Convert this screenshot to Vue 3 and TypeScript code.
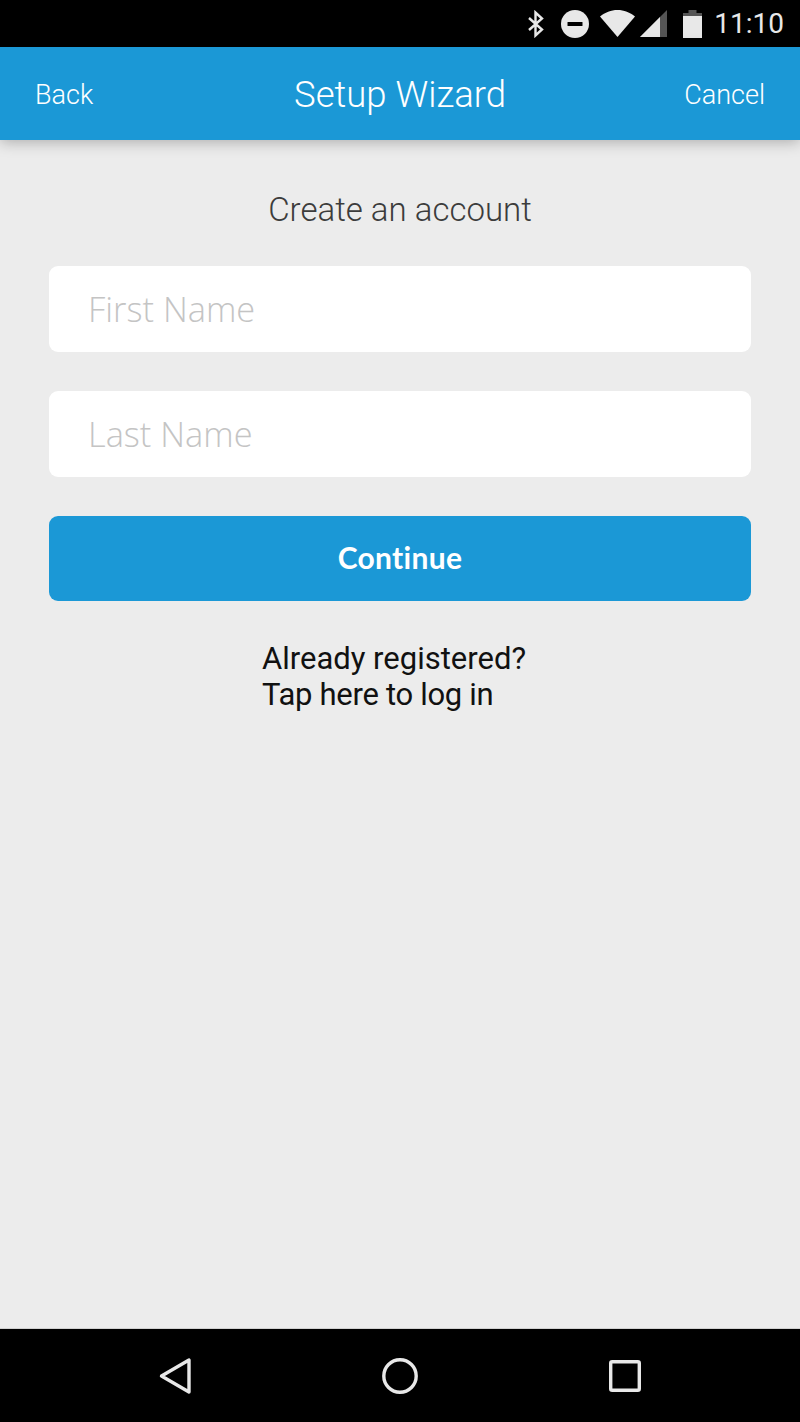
<script setup lang="ts">
const fields: string[] = ["First Name", "Last Name"];
</script>

<template>
  <div class="screen">
    <div class="status-bar">
      <svg class="ic-bt" width="20" height="28" viewBox="0 0 20 28">
        <path d="M3 8 L16 19.5 L9.5 25.5 V2.5 L16 8.5 L3 20" fill="none" stroke="#e8e8e8" stroke-width="2.4" />
      </svg>
      <svg class="ic-dnd" width="28" height="28" viewBox="0 0 28 28">
        <circle cx="14" cy="14" r="14" fill="#e8e8e8" />
        <rect x="6.5" y="12" width="15" height="4" rx="0.5" fill="#000" />
      </svg>
      <svg class="ic-wifi" width="35" height="27" viewBox="0 0 35 27">
        <path d="M0 6.5 C5 2.5 11 0 17.5 0 C24 0 30 2.5 35 6.5 L17.5 27 Z" fill="#e8e8e8" />
      </svg>
      <svg class="ic-signal" width="27" height="27" viewBox="0 0 27 27">
        <path d="M0 27 L27 0 V27 Z" fill="#555" />
        <path d="M0 27 L20 7 V27 Z" fill="#e8e8e8" />
      </svg>
      <svg class="ic-battery" width="19" height="28" viewBox="0 0 19 28">
        <path d="M5.5 0 H13.5 V3 H5.5 Z" fill="#555" />
        <path d="M0 3 H19 V7 H0 Z" fill="#555" />
        <path d="M0 6 H19 V28 H0 Z" fill="#e8e8e8" />
      </svg>
      <span class="clock">11:10</span>
    </div>

    <header class="app-bar">
      <span class="nav-link">Back</span>
      <span class="title">Setup Wizard</span>
      <span class="nav-link cancel">Cancel</span>
    </header>

    <main class="content">
      <h1 class="heading">Create an account</h1>
      <div v-for="f in fields" :key="f" class="field">{{ f }}</div>
      <button class="continue">Continue</button>
      <p class="login">
        <span>Already registered?</span>
        <span class="tap">Tap here to log in</span>
      </p>
    </main>

    <nav class="nav-bar">
      <svg width="34" height="38" viewBox="0 0 34 38">
        <path d="M2.5 19 L30 3 V35 Z" fill="none" stroke="#e8e8e8" stroke-width="3.4" stroke-linejoin="round" />
      </svg>
      <svg class="ic-home" width="36" height="36" viewBox="0 0 36 36">
        <circle cx="18" cy="18" r="16.2" fill="none" stroke="#e8e8e8" stroke-width="3.4" />
      </svg>
      <svg width="32" height="32" viewBox="0 0 32 32">
        <rect x="1.7" y="1.7" width="28.6" height="28.6" rx="1.5" fill="none" stroke="#e8e8e8" stroke-width="3.4" />
      </svg>
    </nav>
  </div>
</template>

<style>
body {
  margin: 0;
}
</style>

<style scoped>
.screen {
  width: 800px;
  height: 1422px;
  display: flex;
  flex-direction: column;
  background: #ececec;
  font-family: Roboto, "Liberation Sans", sans-serif;
}

.status-bar {
  height: 47px;
  flex-shrink: 0;
  background: #000;
  display: flex;
  align-items: center;
  justify-content: flex-end;
  padding-right: 16px;
}
.ic-bt {
  margin-right: 15px;
}
.ic-dnd {
  margin-right: 11px;
}
.ic-signal {
  margin-left: 5px;
}
.ic-battery {
  margin-left: 16px;
}
.clock {
  margin-left: 12px;
  font-size: 28px;
  color: #e8e8e8;
}

.app-bar {
  height: 93px;
  flex-shrink: 0;
  background: #1b98d6;
  display: grid;
  grid-template-columns: 1fr auto 1fr;
  align-items: center;
  padding: 2px 35px 0;
  box-sizing: border-box;
  color: #fff;
  box-shadow: 0 2px 14px rgba(0, 0, 0, 0.28);
  position: relative;
}
.nav-link {
  font-size: 27px;
  font-weight: 300;
}
.cancel {
  text-align: right;
}
.title {
  font-size: 36.5px;
  font-weight: 300;
}

.content {
  flex: 1;
  padding: 0 49px;
  display: flex;
  flex-direction: column;
  border-bottom: 1px solid #d0d0d0;
}
.heading {
  margin: 50px 0 36px;
  font-size: 33px;
  line-height: 40px;
  font-weight: 300;
  text-align: center;
  color: #3c3c3c;
}
.field {
  height: 86px;
  margin-bottom: 39px;
  padding: 0 0 2px 39px;
  box-sizing: border-box;
  display: flex;
  align-items: center;
  background: #fff;
  border-radius: 9px;
  font-family: "Open Sans", sans-serif;
  font-size: 34.4px;
  font-weight: 300;
  color: #c4c4c4;
}
.continue {
  height: 85px;
  padding: 0 0 3px;
  border: 0;
  border-radius: 9px;
  background: #1b98d6;
  color: #fff;
  font-family: Lato, sans-serif;
  font-size: 30px;
  font-weight: 700;
  font-variant-ligatures: none;
  letter-spacing: 0.3px;
}
.login {
  margin: 40px 0 0 213px;
  display: flex;
  flex-direction: column;
  font-size: 31px;
  line-height: 36px;
  color: #111;
}
.tap {
  letter-spacing: -0.3px;
}

.nav-bar {
  height: 93px;
  flex-shrink: 0;
  background: #000;
  display: flex;
  align-items: center;
  justify-content: space-between;
  padding: 0 159px;
}
.ic-home {
  margin-left: -2px;
}
</style>
